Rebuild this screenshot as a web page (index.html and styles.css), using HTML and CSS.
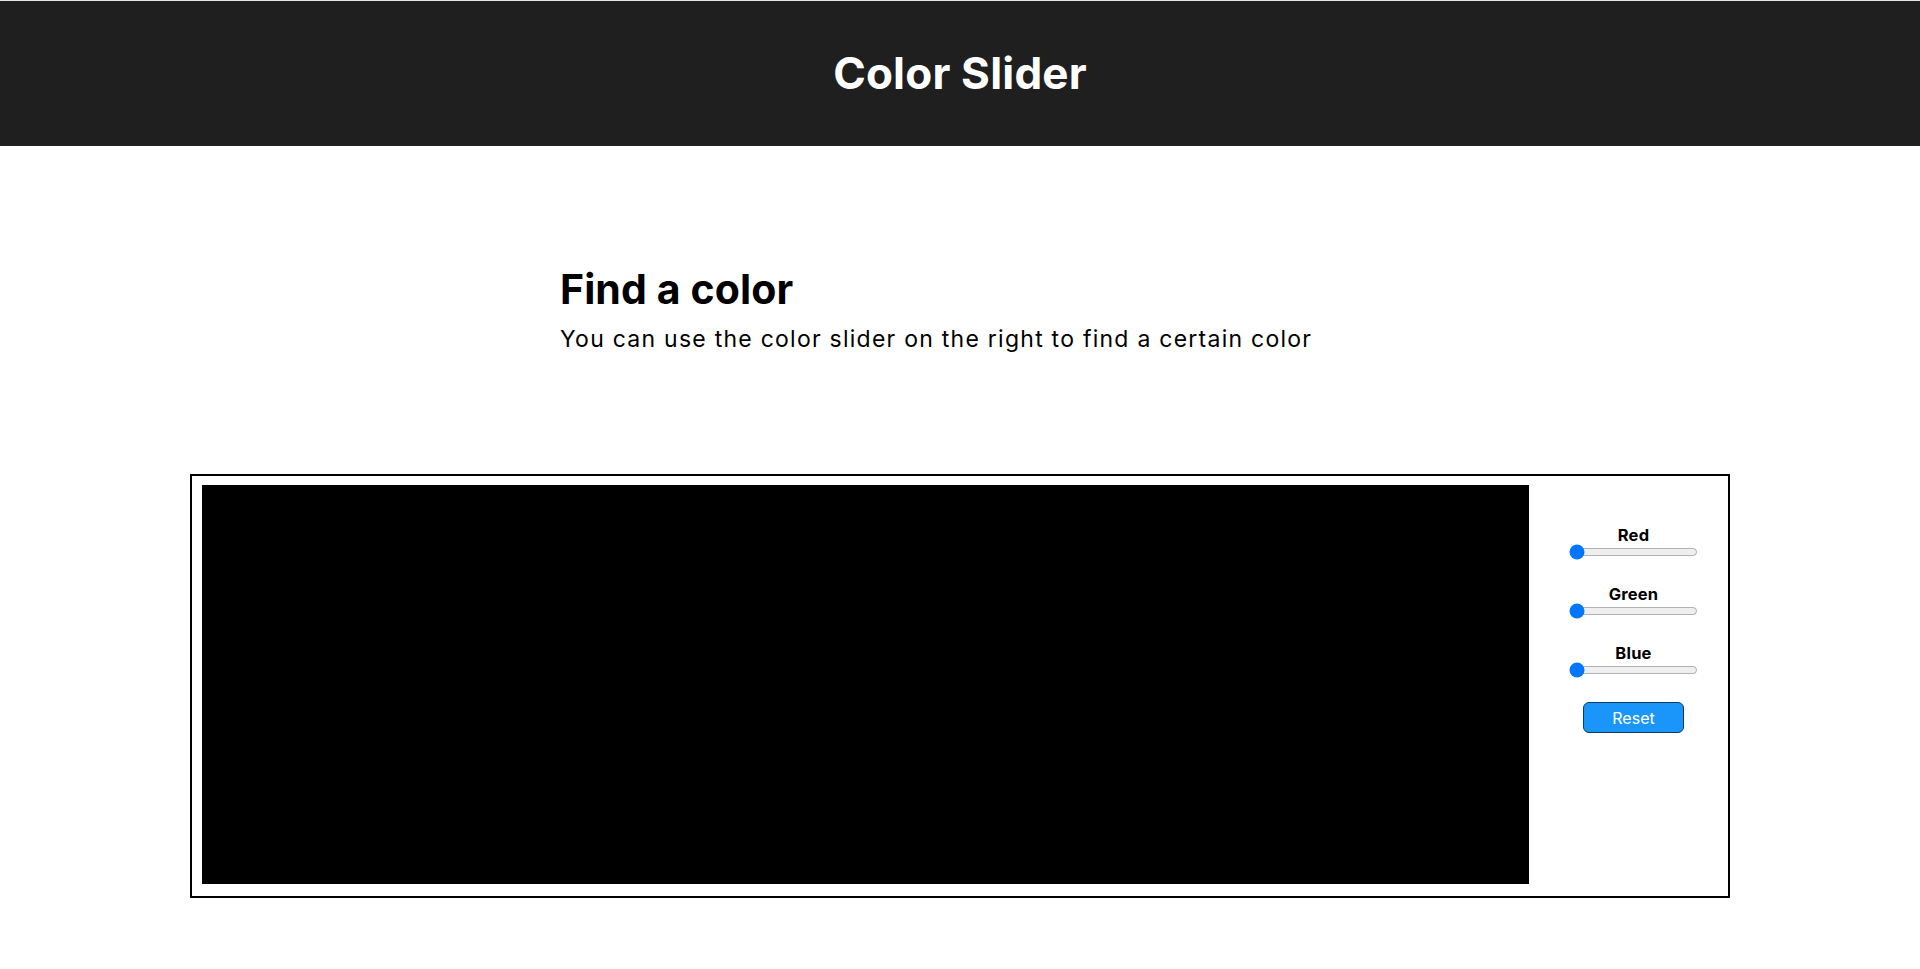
FILE: index.html
```html
<!DOCTYPE html>
<html lang="en">
<head>
<meta charset="utf-8">
<title>Color Slider</title>
<link rel="stylesheet" href="styles.css">
</head>
<body>
<header class="topbar">
  <h1 class="topbar-title">Color Slider</h1>
</header>
<main>
  <section class="intro">
    <h2 class="intro-title">Find a color</h2>
    <p class="intro-text">You can use the color slider on the right to find a certain color</p>
  </section>
  <section class="picker">
    <div class="swatch"></div>
    <div class="controls">
      <div class="control">
        <label class="control-label" for="red">Red</label>
        <input class="control-range" id="red" type="range" min="0" max="255" value="0">
      </div>
      <div class="control">
        <label class="control-label" for="green">Green</label>
        <input class="control-range" id="green" type="range" min="0" max="255" value="0">
      </div>
      <div class="control">
        <label class="control-label" for="blue">Blue</label>
        <input class="control-range" id="blue" type="range" min="0" max="255" value="0">
      </div>
      <button class="reset-btn" type="button">Reset</button>
    </div>
  </section>
</main>
</body>
</html>
```
FILE: styles.css
```css
* { box-sizing: border-box; }

body {
  margin: 0;
  font-family: Inter, "DejaVu Sans", sans-serif;
  color: #000;
  background: #fff;
}

.topbar {
  height: 146px;
  border-top: 1px solid #e4e4e4;
  background: #1f1f1f;
  display: flex;
  align-items: center;
  justify-content: center;
  padding-bottom: 1px;
}

.topbar-title {
  margin: 0;
  color: #fff;
  font-size: 44px;
  line-height: 44px;
  font-weight: 700;
  letter-spacing: 0.2px;
}

.intro {
  width: 800px;
  margin: 119px auto 0;
}

.intro-title {
  margin: 0;
  font-size: 41px;
  line-height: 48px;
  font-weight: 700;
  letter-spacing: 0.1px;
}

.intro-text {
  margin: 11px 0 0;
  font-size: 23px;
  line-height: 30px;
  font-weight: 400;
  letter-spacing: 1.25px;
}

.picker {
  width: 1540px;
  margin: 120px auto 0;
  border: 2px solid #000;
  padding: 9px 10px 12px 10px;
  display: flex;
  align-items: flex-start;
}

.swatch {
  width: 1327px;
  height: 399px;
  background: #000;
  flex: none;
}

.controls {
  flex: 1;
  display: flex;
  flex-direction: column;
  align-items: center;
  gap: 25px;
  padding: 41px 0 0 20px;
}

.control {
  display: flex;
  flex-direction: column;
  align-items: center;
}

.control-label {
  font-size: 16.5px;
  line-height: 18px;
  font-weight: 700;
  letter-spacing: 0.2px;
}

.control-range {
  width: 129px;
  height: 16px;
  margin: 0;
}

.reset-btn {
  width: 101px;
  height: 31px;
  background: #1a96fb;
  border: 1px solid #0c3a60;
  border-radius: 6px;
  color: #fff;
  font-family: Inter, "DejaVu Sans", sans-serif;
  font-size: 16px;
  font-weight: 400;
  padding: 0;
  margin-top: -1px;
}
```
